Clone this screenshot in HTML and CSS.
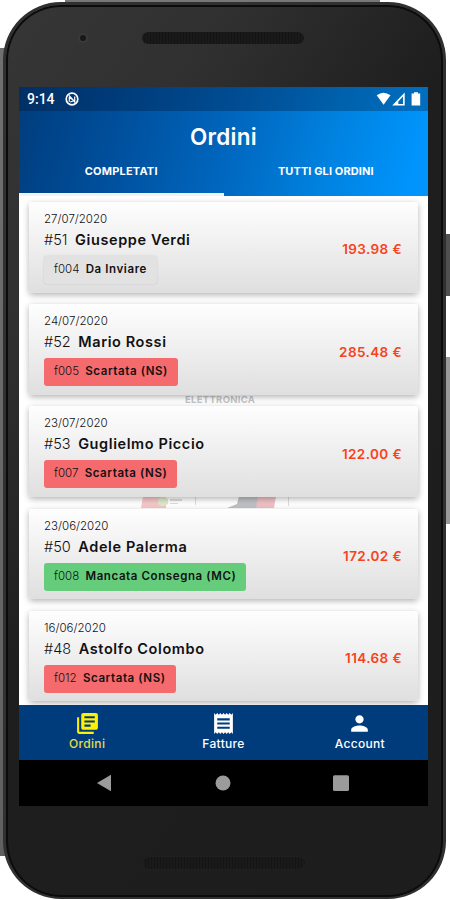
FILE: index.html
```
<!DOCTYPE html>
<html lang="it">
<head>
  <meta charset="UTF-8">
  <meta name="viewport" content="width=device-width, initial-scale=1.0">
  <title>Ordini</title>
  <link rel="stylesheet" href="styles.css">
</head>
<body>
  <div class="device">
    <span class="side-button power"></span>
    <span class="side-button volume"></span>
    <div class="phone">
      <div class="bezel-top">
        <span class="camera"></span>
        <span class="speaker"></span>
      </div>

      <div class="screen">
        <!-- Header -->
        <header class="header">
          <div class="status-bar">
            <span class="clock">9:14</span>
            <svg class="status-app" viewBox="0 0 14 14"><circle cx="7" cy="7" r="5.8" fill="none" stroke="#fff" stroke-width="1.7"/><path d="M4.3 9.8V5.5L9.7 9V4.5M4 3.3l6.3 7.2M5.2 10l3-1" fill="none" stroke="#fff" stroke-width="1.2"/></svg>
            <svg class="status-icons" viewBox="0 0 45 14" fill="#fff"><path d="M.7 3.2Q7.5-1.8 14.5 3.2L7.6 12.7z"/><path d="M28.7.5v13H16.2zM27 4.5l-4.7 5V12H27z" fill-rule="evenodd"/><path d="M38 1.600V.3h4v1.300h2.200v12h-8.600v-12z"/></svg>
          </div>
          <h1>Ordini</h1>
          <div class="tabs">
            <div class="tab active"><span class="tab-done">COMPLETATI</span></div>
            <div class="tab"><span class="tab-all">TUTTI GLI ORDINI</span></div>
          </div>
        </header>

        <!-- Order List -->
        <main class="orders">
          <div class="watermark">
            <span>ELETTRONICA</span>
            <svg viewBox="0 0 150 12"><path fill="#f5c7c9" d="M2 0h23v12H0z"/><path fill="#dfe8c9" d="M17 3q5-4 10 0v5q-5 4-10 0z"/><path fill="#ddd" d="M29 3h12v2H29zM29 7h8v1h-8zM54 0h1v9h-1zM147 0h1v10h-1z"/><path fill="#bfc1c5" d="M98 0h19v12H86l10-4z"/><path fill="#efc0c5" d="M117 0h18l-2 12h-18z"/></svg>
          </div>
          <div class="order-card">
            <div class="details">
              <p class="date">27/07/2020</p>
              <p class="customer">#51 <b>Giuseppe Verdi</b></p>
              <p class="badge pending">f004 <b>Da Inviare</b></p>
            </div>
            <span class="price">193.98 €</span>
          </div>
          <div class="order-card">
            <div class="details">
              <p class="date">24/07/2020</p>
              <p class="customer">#52 <b>Mario Rossi</b></p>
              <p class="badge rejected">f005 <b>Scartata (NS)</b></p>
            </div>
            <span class="price">285.48 €</span>
          </div>
          <div class="order-card">
            <div class="details">
              <p class="date">23/07/2020</p>
              <p class="customer">#53 <b>Guglielmo Piccio</b></p>
              <p class="badge rejected">f007 <b>Scartata (NS)</b></p>
            </div>
            <span class="price">122.00 €</span>
          </div>
          <div class="order-card">
            <div class="details">
              <p class="date">23/06/2020</p>
              <p class="customer">#50 <b>Adele Palerma</b></p>
              <p class="badge delivered">f008 <b>Mancata Consegna (MC)</b></p>
            </div>
            <span class="price">172.02 €</span>
          </div>
          <div class="order-card">
            <div class="details">
              <p class="date">16/06/2020</p>
              <p class="customer">#48 <b>Astolfo Colombo</b></p>
              <p class="badge rejected">f012 <b>Scartata (NS)</b></p>
            </div>
            <span class="price">114.68 €</span>
          </div>
        </main>

        <!-- Bottom Menu -->
        <nav class="bottom-nav">
          <div class="nav-item active">
            <svg viewBox="0 0 24 24"><path d="M4 6H2v14c0 1.100.9 2 2 2h14v-2H4V6zm16-4H8c-1.100 0-2 .9-2 2v12c0 1.100.9 2 2 2h12c1.100 0 2-.9 2-2V4c0-1.100-.9-2-2-2zm-1 9H9V9h10v2zm-4 4H9v-2h6v2zm4-8H9V5h10v2z"/></svg>
            <span>Ordini</span>
          </div>
          <div class="nav-item">
            <svg viewBox="0 0 24 24"><path d="M18 17H6v-2h12v2zm0-4H6v-2h12v2zm0-4H6V7h12v2zM3 22l1.500-1.500L6 22l1.500-1.500L9 22l1.500-1.500L12 22l1.500-1.500L15 22l1.500-1.500L18 22l1.500-1.500L21 22V2l-1.500 1.500L18 2l-1.500 1.500L15 2l-1.500 1.500L12 2l-1.500 1.500L9 2 7.500 3.500 6 2 4.500 3.500 3 2v20z"/></svg>
            <span>Fatture</span>
          </div>
          <div class="nav-item">
            <svg viewBox="0 0 24 24"><path d="M12 12c2.210 0 4-1.790 4-4s-1.790-4-4-4-4 1.790-4 4 1.790 4 4 4zm0 2c-2.670 0-8 1.340-8 4v2h16v-2c0-2.660-5.330-4-8-4z"/></svg>
            <span>Account</span>
          </div>
        </nav>
        <div class="system-nav">
          <svg viewBox="0 0 16 18"><path d="M1 9L15 .8v16.400z"/></svg>
          <svg viewBox="0 0 16 18"><circle cx="8" cy="9" r="7.500"/></svg>
          <svg viewBox="0 0 16 18"><rect x="0" y="1.200" width="16" height="15.800" rx="1.500"/></svg>
        </div>
      </div>

      <div class="bezel-bottom"><span class="speaker"></span></div>
    </div>
  </div>
</body>
</html>
```
FILE: styles.css
```
* {
  box-sizing: border-box;
}

body {
  margin: 0;
  background: #fff;
  font-family: Inter, "Open Sans", sans-serif;
  color: #111;
}

h1, p {
  margin: 0;
}

.device {
  position: relative;
  width: 450px;
  height: 900px;
  padding: 2px 4px 1px 3px;
  overflow: hidden;
  background:
    linear-gradient(#777, #777) 65px 0 / 315px 12px no-repeat,
    linear-gradient(#707070, #606060) 0 48px / 12px 808px no-repeat;
}

.side-button {
  position: absolute;
  right: 0;
  width: 6px;
}

.power {
  top: 234px;
  height: 62px;
  background: #505050;
}

.volume {
  top: 357px;
  height: 167px;
  background: #999;
}

.phone {
  position: relative;
  width: 443px;
  height: 897px;
  padding: 0 14px 0 13px;
  border: 3px solid #303030;
  border-bottom-width: 2px;
  border-radius: 58px;
  background: linear-gradient(125deg, #363636 0%, #303030 22%, #1e1e1e 45%, #1d1d1d 100%);
  box-shadow: inset 0 0 0 2px #0b0b0b;
}

.bezel-top {
  display: flex;
  align-items: flex-start;
  height: 82px;
  padding-top: 27px;
}

.camera {
  width: 10px;
  height: 10px;
  margin: 1px 54px 0 59px;
  border: 2px solid #3a3a3a;
  border-radius: 50%;
  background: #181818;
}

.speaker {
  display: block;
  width: 162px;
  height: 12px;
  border-radius: 6px;
  background: repeating-linear-gradient(90deg, #1a1a1a 0 2px, #141414 2px 3px);
  box-shadow: 0 0 1px #333;
}

.screen {
  width: 409px;
  height: 719px;
  background: #fff;
}

.header {
  height: 109px;
  background: linear-gradient(105deg, #003c7c 0%, #004f9c 25%, #0065bc 50%, #0082e0 75%, #0094fc 95%);
  color: #fff;
}

.status-bar {
  display: flex;
  align-items: center;
  height: 24px;
  padding: 0 7px 0 8px;
  background: rgba(0, 15, 40, 0.28);
}

.clock {
  width: 38px;
  font-family: Roboto, sans-serif;
  font-size: 14px;
  font-weight: 500;
}

.status-app {
  width: 14px;
  height: 14px;
}

.status-icons {
  width: 45px;
  height: 14px;
  margin-left: auto;
}

.header h1 {
  height: 38px;
  padding-top: 11px;
  text-align: center;
  font-size: 22.5px;
  line-height: 29px;
  font-weight: 600;
  letter-spacing: 0.3px;
}

.tabs {
  display: flex;
  height: 47px;
}

.tab {
  flex: 1;
  padding-top: 14px;
  text-align: center;
  font-size: 11px;
  line-height: 16px;
  font-weight: 700;
}

.tab.active {
  border-bottom: 3px solid #f2f2f2;
}

.tab-done {
  letter-spacing: 0.2px;
}

.tab-all {
  letter-spacing: 0.1px;
}

.orders {
  position: relative;
  display: flex;
  flex-direction: column;
  gap: 11.5px;
  height: 509px;
  padding: 6px 10px 0;
  overflow: hidden;
}

/* logo seen between the cards */
.watermark {
  position: absolute;
  top: 197px;
  left: 122px;
  width: 150px;
}

.watermark span {
  display: block;
  padding-left: 44px;
  height: 14px;
  font-size: 9.5px;
  line-height: 14px;
  font-weight: 700;
  letter-spacing: 0.3px;
  color: #c5c5c5;
}

.watermark svg {
  display: block;
  width: 150px;
  height: 12px;
  margin-top: 89px;
}

.order-card {
  position: relative;
  display: flex;
  flex-shrink: 0;
  justify-content: space-between;
  align-items: center;
  height: 90.7px;
  padding: 0 16px 0 15px;
  border-radius: 3px;
  background: linear-gradient(#fefefe, #dfdfdf);
  box-shadow: 0 2px 6px rgba(0, 0, 0, 0.3);
}

.details {
  align-self: flex-start;
  padding-top: 8px;
}

.date {
  font-size: 11.5px;
  line-height: 18px;
  font-weight: 300;
}

.customer {
  font-size: 14.5px;
  line-height: 23.5px;
  font-weight: 300;
}

.customer b {
  margin-left: 3.5px;
  font-weight: 600;
  letter-spacing: 0.6px;
}

.badge {
  display: inline-block;
  height: 28px;
  margin-top: 4.500px;
  padding: 0 10px;
  border-radius: 3px;
  font-size: 11.5px;
  line-height: 27px;
  font-weight: 300;
}

.badge b {
  margin-left: 3px;
  font-weight: 600;
  letter-spacing: 0.6px;
}

.pending {
  background: #e2e2e2;
  box-shadow: 0 0 2px rgba(0, 0, 0, 0.15);
}

.rejected {
  background: #f56a6d;
}

.delivered {
  background: #65cc7c;
}

.price {
  padding-top: 4px;
  font-size: 13.5px;
  font-weight: 600;
  letter-spacing: 0.4px;
  color: #f9421b;
}

.bottom-nav {
  display: flex;
  height: 55px;
  background: #003c7c;
}

.nav-item {
  flex: 1;
  display: flex;
  flex-direction: column;
  align-items: center;
  padding-top: 6px;
  font-size: 12px;
  line-height: 16px;
  font-weight: 500;
  letter-spacing: 0.3px;
  color: #fff;
}

.nav-item svg {
  width: 25px;
  height: 25px;
  fill: currentColor;
}

.nav-item.active {
  color: #e8dc45;
}

.nav-item.active svg {
  fill: #fff000;
}

.system-nav {
  display: flex;
  justify-content: space-between;
  align-items: center;
  height: 46px;
  padding: 0 79px 0 77px;
  background: #000;
}

.system-nav svg {
  width: 16px;
  height: 18px;
  fill: #9b9b9b;
}

.bezel-bottom {
  display: flex;
  justify-content: center;
  padding-top: 51px;
}
```
